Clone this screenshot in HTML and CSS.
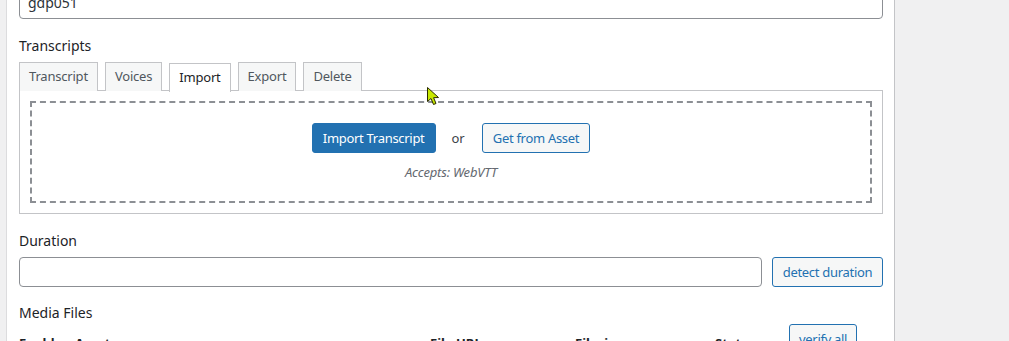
FILE: index.html
```html
<!DOCTYPE html>
<html>
<head>
<meta charset="utf-8">
<link rel="stylesheet" href="styles.css">
</head>
<body>
<div class="page">
  <div class="panel">
    <div class="scroll">
      <input class="text-input top-input" type="text" value="gdp051">

      <h3 class="field-label transcripts-label">Transcripts</h3>
      <div class="tabs">
        <span class="tab">Transcript</span>
        <span class="tab">Voices</span>
        <span class="tab active">Import</span>
        <span class="tab">Export</span>
        <span class="tab">Delete</span>
      </div>
      <div class="tab-panel">
        <div class="dropzone">
          <div class="actions">
            <button class="btn primary">Import Transcript</button>
            <span class="or">or</span>
            <button class="btn secondary">Get from Asset</button>
          </div>
          <div class="accepts">Accepts: WebVTT</div>
        </div>
      </div>

      <h3 class="field-label duration-label">Duration</h3>
      <div class="duration-row">
        <input class="text-input duration-input" type="text" value="">
        <button class="btn secondary detect">detect duration</button>
      </div>

      <h3 class="field-label media-label">Media Files</h3>
      <div class="media-head">
        <span class="th c-enable">Enable</span>
        <span class="th c-asset">Asset</span>
        <span class="th c-url">File URL</span>
        <span class="th c-size">Filesize</span>
        <span class="th c-status">Status</span>
        <span class="c-verify"><button class="btn secondary verify">verify all</button></span>
      </div>
    </div>
  </div>
</div>
<svg class="cursor" width="16" height="22" viewBox="0 0 16 22">
  <path d="M1.5 1.5 L1.5 15.5 L5 12.5 L7.5 18.5 L10 17.5 L7.6 11.7 L12.5 11.5 Z" fill="#c7e800" stroke="#2b2b00" stroke-width="1" stroke-linejoin="round"/>
</svg>
</body>
</html>
```

FILE: styles.css
```css
* { box-sizing: border-box; }
html, body {
  margin: 0;
  padding: 0;
  background: #f0f0f1;
  height: 341px;
  overflow: hidden;
  font-family: "Noto Sans", "Open Sans", sans-serif;
  color: #1d2327;
}
.page {
  display: flex;
  padding-left: 6px;
}
.panel {
  width: 889px;
  height: 341px;
  background: #fff;
  border-left: 1px solid #dcdcde;
  border-right: 1px solid #c3c4c7;
  padding: 0 11px 0 12px;
  overflow: hidden;
}
.scroll {
  margin-top: -14px;
  display: flex;
  flex-direction: column;
}
.text-input {
  display: block;
  font-family: inherit;
  font-size: 14px;
  color: #2c3338;
  border: 1px solid #8c8f94;
  border-radius: 4px;
  background: #fff;
  padding: 0 8px;
  outline: none;
}
.top-input {
  width: 864px;
  height: 33px;
  line-height: 31px;
}
.field-label {
  margin: 0;
  font-size: 14px;
  font-weight: 400;
  line-height: 20px;
  color: #1d2327;
}
.transcripts-label { margin-top: 17px; margin-bottom: 6px; }
.tabs {
  display: flex;
  gap: 7px;
  height: 28px;
  position: relative;
  z-index: 1;
}
.tab {
  display: block;
  height: 29px;
  padding: 0 9px;
  font-size: 13px;
  letter-spacing: -0.2px;
  line-height: 27px;
  color: #50575e;
  background: #f6f7f7;
  border: 1px solid #c3c4c7;
  border-bottom: none;
}
.tab.active {
  margin-top: 1px;
  height: 29px;
  background: #fff;
  color: #1d2327;
}
.tab-panel {
  border: 1px solid #c3c4c7;
  padding: 10px;
  width: 864px;
}
.dropzone {
  border: 2px dashed #8c8f94;
  height: 102px;
  display: flex;
  flex-direction: column;
  align-items: center;
  padding-top: 20px;
}
.actions {
  display: flex;
  align-items: center;
  gap: 0;
}
.btn {
  font-family: inherit;
  font-size: 13px;
  letter-spacing: -0.3px;
  height: 30px;
  line-height: 28px;
  padding: 0 10px;
  border-radius: 3px;
  cursor: pointer;
}
.primary {
  background: #2271b1;
  border: 1px solid #2271b1;
  color: #fff;
}
.secondary {
  background: #f6f7f7;
  border: 1px solid #2271b1;
  color: #2271b1;
}
.or {
  font-size: 13px;
  color: #3c434a;
  margin: 0 17px 0 16px;
}
.accepts {
  margin-top: 10px;
  font-size: 13px;
  letter-spacing: -0.2px;
  font-style: italic;
  color: #646970;
}
.duration-label { margin-top: 17px; margin-bottom: 6px; }
.duration-row {
  display: flex;
  gap: 10px;
  width: 864px;
}
.duration-input {
  flex: 1;
  height: 30px;
}
.detect { width: 111px; padding: 0; }
.media-label { margin-top: 16px; }
.media-head {
  display: grid;
  grid-template-columns: 56px 355px 145px 140px 74px 80px;
  align-items: start;
  margin-top: 1px;
}
.th {
  font-size: 13px;
  font-weight: 700;
  padding-top: 9px;
  line-height: 20px;
  color: #1d2327;
}
.verify { height: 30px; padding: 0 9px; }
.cursor {
  position: absolute;
  left: 426px;
  top: 86px;
}
```
